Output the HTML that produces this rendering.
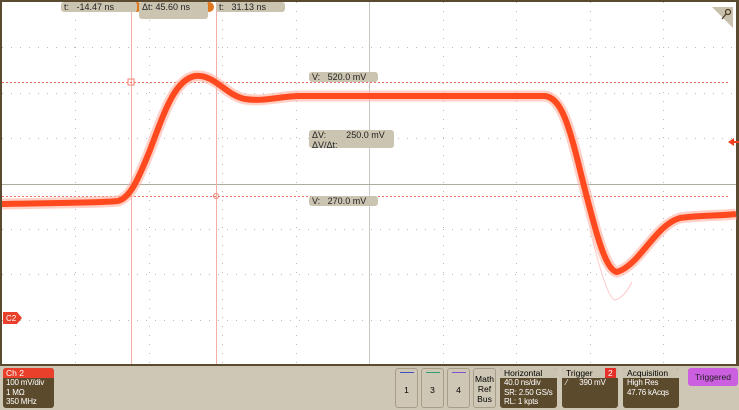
<!DOCTYPE html>
<html><head><meta charset="utf-8"><style>
body{margin:0;width:739px;height:410px;overflow:hidden;background:#cfc7b5;font-family:"Liberation Sans",sans-serif;}
.lbl{position:absolute;background:#cbc4b0;border-radius:3px;font-size:9px;color:#222;line-height:10px;white-space:nowrap;}
.box{position:absolute;background:#5c4a2c;border-radius:3px;overflow:hidden;white-space:nowrap;}
.box .h{background:#cbc4b0;font-size:8.5px;height:10px;line-height:10px;padding-left:4px}
.box .b{color:#fff;font-size:8px;line-height:9.5px;padding-left:4px;letter-spacing:-0.2px}
</style></head><body>
<svg width="739" height="410" style="position:absolute;left:0;top:0">
<rect x="0" y="0" width="739" height="366" fill="#5a4a30"/>
<rect x="2" y="2" width="734" height="362" fill="#fff"/>
<g stroke="#bbb" stroke-width="1" stroke-dasharray="1 8">
<line x1="75.5" y1="2" x2="75.5" y2="364"/><line x1="149.5" y1="2" x2="149.5" y2="364"/><line x1="222.5" y1="2" x2="222.5" y2="364"/><line x1="296.5" y1="2" x2="296.5" y2="364"/><line x1="443.5" y1="2" x2="443.5" y2="364"/><line x1="516.5" y1="2" x2="516.5" y2="364"/><line x1="590.5" y1="2" x2="590.5" y2="364"/><line x1="663.5" y1="2" x2="663.5" y2="364"/>
<line x1="2" y1="47.5" x2="736" y2="47.5"/><line x1="2" y1="93.5" x2="736" y2="93.5"/><line x1="2" y1="138.5" x2="736" y2="138.5"/><line x1="2" y1="229.5" x2="736" y2="229.5"/><line x1="2" y1="274.5" x2="736" y2="274.5"/><line x1="2" y1="320.5" x2="736" y2="320.5"/>
</g>
<line x1="369.5" y1="2" x2="369.5" y2="364" stroke="#c8c8c0"/>
<line x1="2" y1="184.5" x2="736" y2="184.5" stroke="#b0ac9c"/>
<line x1="131.5" y1="2" x2="131.5" y2="364" stroke="#f4b0a8"/>
<line x1="216.5" y1="2" x2="216.5" y2="364" stroke="#f4b0a8"/>
<line x1="2" y1="82.5" x2="728" y2="82.5" stroke="#f07060" stroke-dasharray="2 2"/>
<line x1="2" y1="196.5" x2="728" y2="196.5" stroke="#f07060" stroke-dasharray="2 2"/>
<rect x="128" y="79" width="6" height="6" fill="none" stroke="#f08070"/>
<circle cx="216" cy="196" r="2.5" fill="none" stroke="#f08070"/>
<path d="M2,204 C40,203 100,203 118,201 C130,198 138,180 150,150 C165,110 175,80 195,76 C215,74 225,95 245,99 C265,102 280,96 300,96 L545,96 C560,98 568,120 580,170 C595,230 605,270 617,272 C640,265 655,225 680,218 C700,215 720,216 736,214" fill="none" stroke="#ffb0a0" stroke-width="11" opacity="0.6"/>
<path d="M2,204 C40,203 100,203 118,201 C130,198 138,180 150,150 C165,110 175,80 195,76 C215,74 225,95 245,99 C265,102 280,96 300,96 L545,96 C560,98 568,120 580,170 C595,230 605,270 617,272 C640,265 655,225 680,218 C700,215 720,216 736,214" fill="none" stroke="#ff4a20" stroke-width="6"/>
<path d="M590,230 C600,270 608,298 615,300 C622,298 628,290 632,282" fill="none" stroke="#ffc8c8" stroke-width="1"/>
<polygon points="712,7 733,7 733,28" fill="#c9c1ad"/>
<circle cx="728" cy="12" r="2.5" fill="none" stroke="#4a3a20" stroke-width="1.2"/><line x1="726" y1="14" x2="722" y2="19" stroke="#4a3a20" stroke-width="1.2"/>
<polygon points="728,142 734,138 734,146" fill="#f04020"/><line x1="732" y1="142" x2="739" y2="142" stroke="#f04020" stroke-width="2"/>
<path d="M3,312 H17 L22,318 L17,324 H3 Z" fill="#e8402a"/>
<text x="6" y="321" font-size="8" fill="#fff" font-family="Liberation Sans">C2</text>
<circle cx="137" cy="7" r="5" fill="#e07820"/><circle cx="209" cy="7" r="5" fill="#e07820"/>
</svg>
<div class="lbl" style="left:61px;top:2px;width:73px;height:10px;padding-left:3px">t:&nbsp;&nbsp;&nbsp;-14.47 ns</div>
<div class="lbl" style="left:139px;top:2px;width:66px;height:17px;padding-left:3px">Δt: 45.60 ns</div>
<div class="lbl" style="left:216px;top:2px;width:66px;height:10px;padding-left:3px">t:&nbsp;&nbsp;&nbsp;31.13 ns</div>
<div class="lbl" style="left:309px;top:72px;width:66px;height:10px;padding-left:3px">V:&nbsp;&nbsp;&nbsp;520.0 mV</div>
<div class="lbl" style="left:309px;top:130px;width:82px;height:18px;padding-left:3px">ΔV:&nbsp;&nbsp;&nbsp;&nbsp;&nbsp;&nbsp;&nbsp;&nbsp;250.0 mV<br>ΔV/Δt:</div>
<div class="lbl" style="left:309px;top:196px;width:66px;height:10px;padding-left:3px">V:&nbsp;&nbsp;&nbsp;270.0 mV</div>
<div class="box" style="left:3px;top:368px;width:51px;height:40px">
<div style="background:#e8402a;color:#fff;font-size:8.5px;height:10px;line-height:10px;padding-left:3px">Ch 2</div>
<div class="b" style="padding-left:3px">100 mV/div<br>1 MΩ<br>350 MHz</div></div>
<div style="position:absolute;left:395px;top:368px;width:23px;height:40px;border:1px solid #a89e88;border-radius:3px;box-sizing:border-box;text-align:center;font-size:8.5px;padding-top:16px">1<div style="position:absolute;left:4px;top:3px;width:14px;height:1px;background:#4050c0"></div></div>
<div style="position:absolute;left:421px;top:368px;width:23px;height:40px;border:1px solid #a89e88;border-radius:3px;box-sizing:border-box;text-align:center;font-size:8.5px;padding-top:16px">3<div style="position:absolute;left:4px;top:3px;width:14px;height:1px;background:#30a070"></div></div>
<div style="position:absolute;left:447px;top:368px;width:23px;height:40px;border:1px solid #a89e88;border-radius:3px;box-sizing:border-box;text-align:center;font-size:8.5px;padding-top:16px">4<div style="position:absolute;left:4px;top:3px;width:14px;height:1px;background:#8050d0"></div></div>
<div style="position:absolute;left:473px;top:368px;width:23px;height:40px;border:1px solid #a89e88;border-radius:3px;box-sizing:border-box;text-align:center;font-size:8.5px;line-height:10px;padding-top:5px">Math<br>Ref<br>Bus</div>
<div class="box" style="left:500px;top:368px;width:57px;height:40px">
<div class="h">Horizontal</div>
<div class="b">40.0 ns/div<br>SR: 2.50 GS/s<br>RL: 1 kpts</div></div>
<div class="box" style="left:562px;top:368px;width:56px;height:40px">
<div class="h">Trigger <span style="background:#e8302a;color:#fff;padding:0 3px;margin-left:10px">2</span></div>
<div class="b">⁄&nbsp;&nbsp;&nbsp;&nbsp;&nbsp;&nbsp;390 mV</div></div>
<div class="box" style="left:623px;top:368px;width:56px;height:40px">
<div class="h">Acquisition</div>
<div class="b">High Res<br>47.76 kAcqs</div></div>
<div style="position:absolute;left:688px;top:368px;width:50px;height:18px;background:#cc5ee0;border-radius:3px;font-size:8.5px;line-height:18px;text-align:center;color:#222">Triggered</div>
</body></html>
